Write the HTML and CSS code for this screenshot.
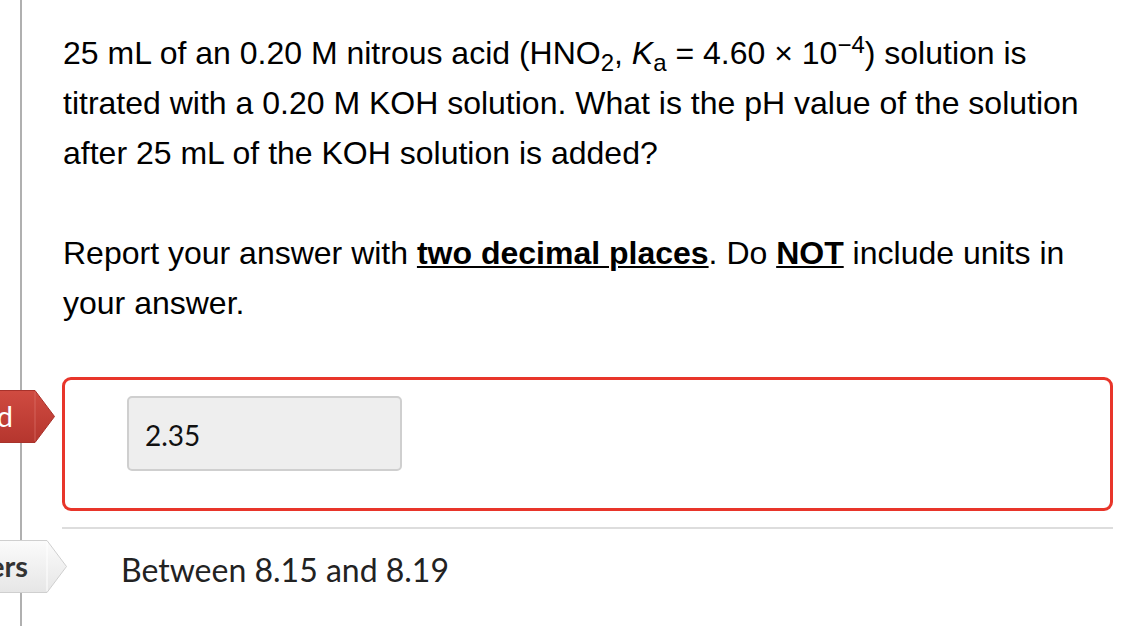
FILE: index.html
```html
<!DOCTYPE html>
<html>
<head>
<meta charset="utf-8">
<link rel="stylesheet" href="styles.css">
</head>
<body>
<div class="page">
  <div class="rail">
    <div class="tab tab-red">
      <svg class="tab-shape" width="95" height="53" viewBox="0 0 95 53">
        <defs>
          <linearGradient id="gr" x1="0" y1="0" x2="0" y2="1">
            <stop offset="0" stop-color="#d04b41"/>
            <stop offset="1" stop-color="#b5362e"/>
          </linearGradient>
        </defs>
        <polygon points="0,0.5 75,0.5 94.5,26.5 75,52.5 0,52.5" fill="url(#gr)" stroke="#a8322b" stroke-width="1"/>
        <line x1="75" y1="2" x2="75" y2="51" stroke="#e07a72" stroke-width="1" opacity="0.6"/>
      </svg>
      <span class="tab-label">d</span>
    </div>
    <div class="tab tab-gray">
      <svg class="tab-shape" width="107" height="53" viewBox="0 0 107 53">
        <defs>
          <linearGradient id="gg" x1="0" y1="0" x2="0" y2="1">
            <stop offset="0" stop-color="#fbfbfb"/>
            <stop offset="1" stop-color="#e6e6e6"/>
          </linearGradient>
        </defs>
        <polygon points="0,0.5 87,0.5 106.5,26.5 87,52.5 0,52.5" fill="url(#gg)" stroke="#cfcfcf" stroke-width="1"/>
        <line x1="87" y1="2" x2="87" y2="51" stroke="#ffffff" stroke-width="1"/>
      </svg>
      <span class="tab-label">ers</span>
    </div>
  </div>
  <div class="content">
    <p class="q">25 mL of an 0.20 M nitrous acid (HNO<sub>2</sub>, <i>K</i><sub>a</sub> = 4.60 × 10<sup>−4</sup>) solution is titrated with a 0.20 M KOH solution. What is the pH value of the solution after 25 mL of the KOH solution is added?</p>
    <p class="q q2">Report your answer with <b><u>two decimal places</u></b>. Do <b><u>NOT</u></b> include units in your answer.</p>
    <div class="answer-box">
      <div class="answer-input">2.35</div>
    </div>
    <div class="sep"></div>
    <div class="correct">Between 8.15 and 8.19</div>
  </div>
</div>
</body>
</html>
```
FILE: styles.css
```css
html, body {
  margin: 0;
  padding: 0;
  background: #fff;
}
.page {
  display: flex;
  width: 1138px;
  height: 626px;
  overflow: hidden;
  position: relative;
}
.rail {
  width: 62px;
  flex: none;
  position: relative;
}
.rail::before {
  content: "";
  position: absolute;
  left: 20px;
  top: 0;
  bottom: 0;
  width: 2px;
  background: #b0b0b0;
}
.tab {
  position: absolute;
  height: 53px;
  display: flex;
  align-items: center;
  justify-content: flex-end;
  box-sizing: border-box;
  font-family: Lato, "Open Sans", sans-serif;
  font-size: 29px;
}
.tab-shape {
  position: absolute;
  left: 0;
  top: 0;
}
.tab-red {
  top: 390px;
  left: -40px;
  width: 95px;
  color: #fff;
  padding-right: 42px;
}
.tab-gray {
  top: 540px;
  left: -40px;
  width: 107px;
  color: #333;
  font-weight: 700;
  padding-right: 39px;
}
.tab-label {
  line-height: 1;
  position: relative;
  top: -1px;
}
.content {
  width: 1051px;
  flex: none;
  padding-top: 28px;
}
.q {
  margin: 0;
  font-family: "Liberation Sans", Arial, sans-serif;
  font-size: 32px;
  line-height: 50px;
  color: #000;
  padding-left: 1px;
}
.q2 {
  margin-top: 50px;
}
.q sub, .q sup {
  font-size: 75%;
  line-height: 0;
}
.q sub {
  vertical-align: -0.28em;
}
.q sup {
  vertical-align: 0.45em;
}
.q b u {
  text-decoration-thickness: 2px;
  text-underline-offset: 2px;
}
.answer-box {
  margin-top: 49px;
  border: 3px solid #e8352a;
  border-radius: 9px;
  height: 134px;
  box-sizing: border-box;
  padding: 16px 0 0 62px;
}
.answer-input {
  width: 275px;
  height: 75px;
  box-sizing: border-box;
  background: #eeeeee;
  border: 2px solid #cfcfcf;
  border-radius: 5px;
  font-family: Lato, "Open Sans", sans-serif;
  font-size: 28px;
  color: #111;
  display: flex;
  align-items: center;
  padding-left: 16px;
  padding-top: 2px;
}
.sep {
  margin-top: 16px;
  height: 2px;
  background: #dddddd;
}
.correct {
  margin-top: 20px;
  padding-left: 59px;
  font-family: Lato, "Open Sans", sans-serif;
  font-size: 32px;
  line-height: 42px;
  color: #222;
}
```
